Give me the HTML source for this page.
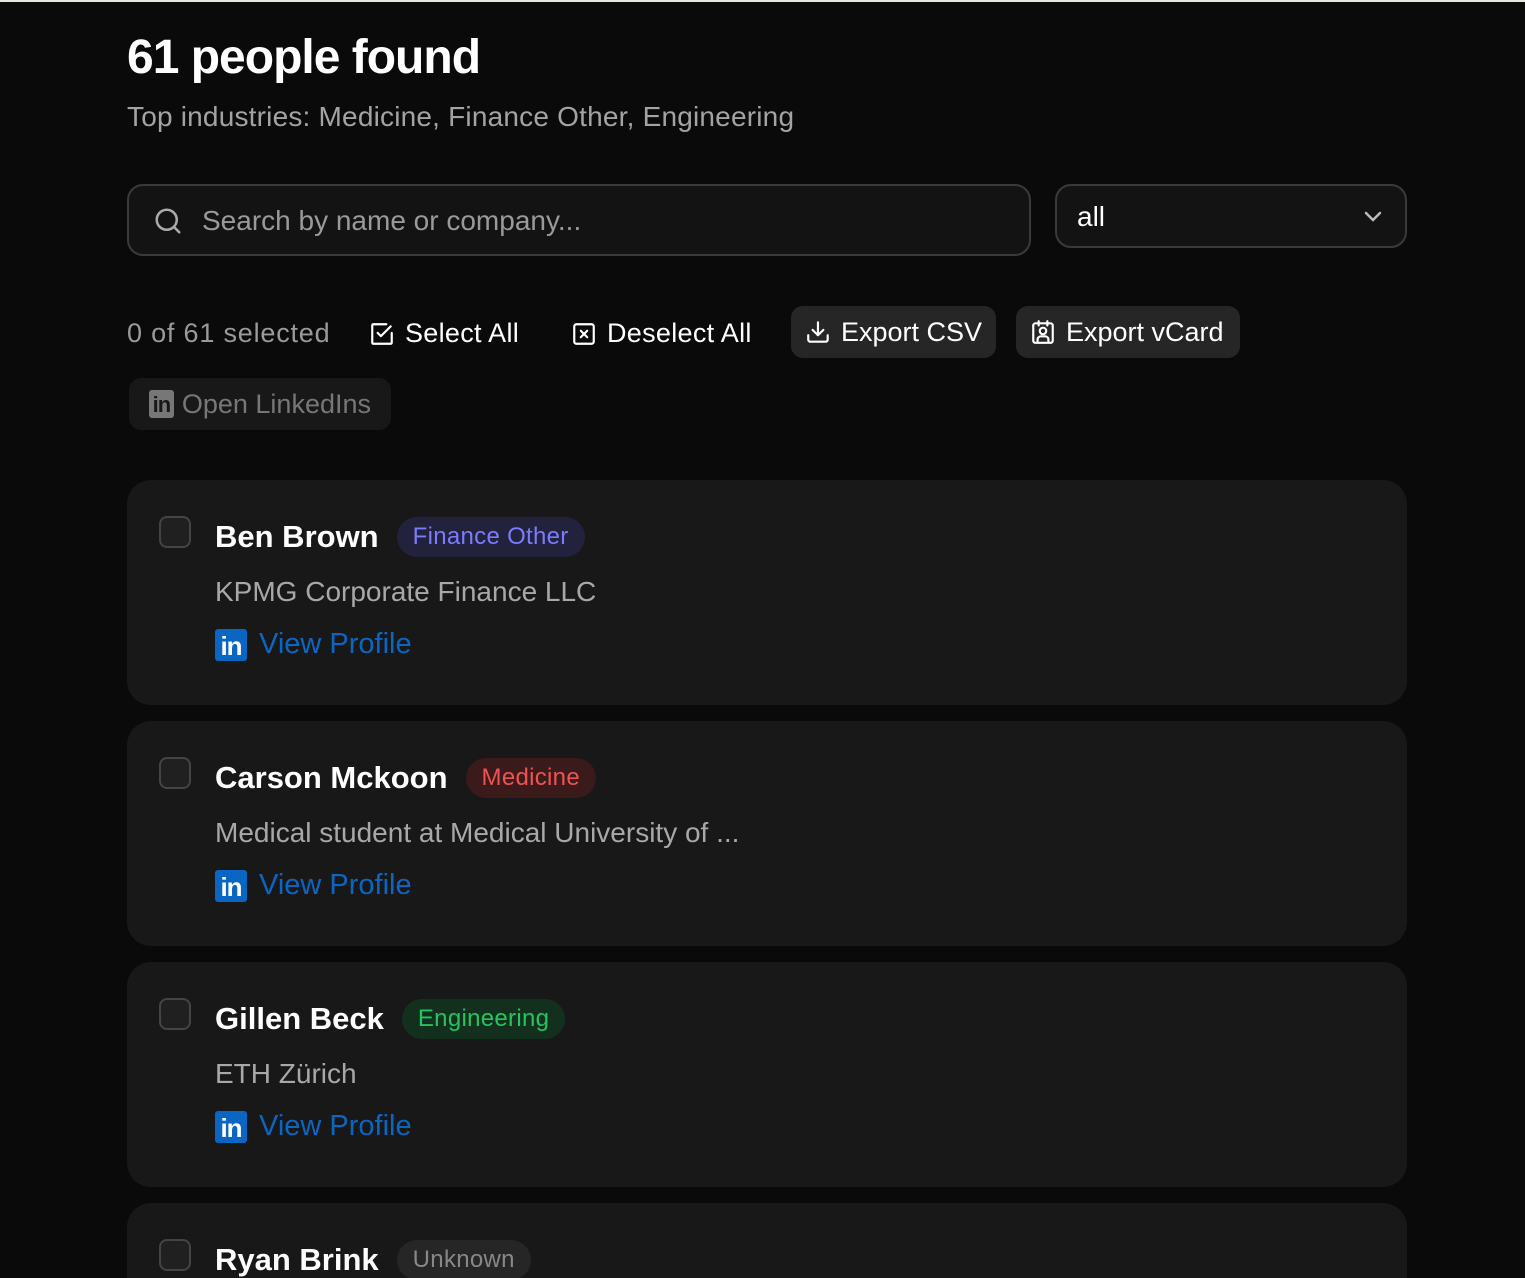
<!DOCTYPE html>
<html><head><meta charset="utf-8"><style>
*{margin:0;padding:0;box-sizing:border-box}
html,body{width:1525px;height:1278px;overflow:hidden}
body{background:#0a0a0a;font-family:"Liberation Sans",sans-serif;position:relative}
.top{position:absolute;left:0;top:0;width:1525px;height:2px;background:#e6e6df}
.abs{position:absolute;white-space:nowrap}
h1{position:absolute;left:127px;top:30px;font-size:48px;font-weight:bold;color:#fff;letter-spacing:-1px}
.sub{left:127px;top:101px;font-size:28px;color:#a3a3a3;letter-spacing:0.2px}
.search{left:127px;top:184px;width:904px;height:72px;border:2px solid #3a3a3a;border-radius:16px;background:#131313}
.search span{position:absolute;left:73px;top:19px;font-size:28px;color:#9a9a9a}
.sel{left:1055px;top:184px;width:352px;height:64px;border:2px solid #3a3a3a;border-radius:16px;background:#131313}
.sel span{position:absolute;left:20px;top:15px;font-size:28px;color:#fff}
.ctl{top:318px;font-size:27px;color:#fff;display:flex;align-items:center;gap:10px;letter-spacing:0.3px}
.btn{background:#262626;border-radius:12px;height:52px;top:306px;padding:0 14px;letter-spacing:0}
.card{position:absolute;left:127px;width:1280px;height:225px;background:#181818;border-radius:24px}
.cb{position:absolute;left:32px;top:36px;width:32px;height:32px;border:2px solid #444;border-radius:8px;background:#202020}
.name{position:absolute;left:88px;top:37px;font-size:31px;font-weight:bold;color:#fff;display:flex;align-items:center;gap:18px}
.badge{font-size:24px;font-weight:normal;padding:0 16px;height:40px;line-height:40px;border-radius:20px;letter-spacing:0.3px}
.co{position:absolute;left:88px;top:96px;font-size:28px;color:#a8a8a8}
.vp{position:absolute;left:88px;top:148px;display:flex;align-items:center;gap:12px;font-size:29px;color:#0a66c2}
.li{width:32px;height:32px;background:#0a66c2;border-radius:3px;color:#fff;font-weight:bold;font-size:26px;line-height:34px;text-align:center;letter-spacing:-1px}
</style></head><body>
<div class="top"></div>
<h1>61 people found</h1>
<div class="abs sub">Top industries: Medicine, Finance Other, Engineering</div>
<div class="abs search"><svg style="position:absolute;left:24px;top:20px" width="30" height="30" viewBox="0 0 24 24" fill="none" stroke="#aaa" stroke-width="2" stroke-linecap="round"><circle cx="11" cy="11" r="8"/><path d="M21 21l-4.3-4.3"/></svg><span>Search by name or company...</span></div>
<div class="abs sel"><span>all</span><svg style="position:absolute;right:20px;top:18px" width="24" height="24" viewBox="0 0 24 24" fill="none" stroke="#bbb" stroke-width="2.5" stroke-linecap="round"><path d="M5 9l7 7 7-7"/></svg></div>
<div class="abs ctl" style="left:127px;color:#9a9a9a;letter-spacing:0.8px">0 of 61 selected</div>
<div class="abs ctl" style="left:369px"><svg width="26" height="26" viewBox="0 0 24 24" fill="none" stroke="#fff" stroke-width="2" stroke-linecap="round" stroke-linejoin="round"><path d="M21 11v9a1 1 0 0 1-1 1H4a1 1 0 0 1-1-1V4a1 1 0 0 1 1-1h12"/><path d="M8 11l3 3 9-9"/></svg>Select All</div>
<div class="abs ctl" style="left:571px"><svg width="26" height="26" viewBox="0 0 24 24" fill="none" stroke="#fff" stroke-width="2" stroke-linecap="round"><rect x="3" y="3" width="18" height="18" rx="2"/><path d="M9 9l6 6M15 9l-6 6"/></svg>Deselect All</div>
<div class="abs ctl btn" style="left:791px;width:205px"><svg width="26" height="26" viewBox="0 0 24 24" fill="none" stroke="#fff" stroke-width="2" stroke-linecap="round" stroke-linejoin="round"><path d="M21 15v4a2 2 0 0 1-2 2H5a2 2 0 0 1-2-2v-4"/><path d="M7 10l5 5 5-5M12 15V3"/></svg>Export CSV</div>
<div class="abs ctl btn" style="left:1016px;width:224px"><svg width="26" height="26" viewBox="0 0 24 24" fill="none" stroke="#fff" stroke-width="2" stroke-linecap="round"><rect x="3" y="4" width="18" height="18" rx="2"/><path d="M8 2v4M16 2v4"/><circle cx="12" cy="11" r="3"/><path d="M7 21v-2a3 3 0 0 1 3-3h4a3 3 0 0 1 3 3v2"/></svg>Export vCard</div>
<div class="abs ctl" style="left:129px;top:378px;height:52px;width:262px;background:#181818;border-radius:12px;padding:0 20px;color:#777;gap:8px;letter-spacing:0"><div class="li" style="background:#777;color:#181818;width:28px;height:28px;font-size:22px;line-height:30px">in</div>Open LinkedIns</div>

<div class="card" style="top:480px"><div class="cb"></div><div class="name">Ben Brown<span class="badge" style="background:#23223d;color:#7b7bff">Finance Other</span></div><div class="co">KPMG Corporate Finance LLC</div><div class="vp"><div class="li">in</div>View Profile</div></div>
<div class="card" style="top:721px"><div class="cb"></div><div class="name">Carson Mckoon<span class="badge" style="background:#3a1a1a;color:#f05252">Medicine</span></div><div class="co">Medical student at Medical University of ...</div><div class="vp"><div class="li">in</div>View Profile</div></div>
<div class="card" style="top:962px"><div class="cb"></div><div class="name">Gillen Beck<span class="badge" style="background:#13301f;color:#22c55e">Engineering</span></div><div class="co">ETH Zürich</div><div class="vp"><div class="li">in</div>View Profile</div></div>
<div class="card" style="top:1203px"><div class="cb"></div><div class="name">Ryan Brink<span class="badge" style="background:#262626;color:#888">Unknown</span></div></div>
</body></html>
